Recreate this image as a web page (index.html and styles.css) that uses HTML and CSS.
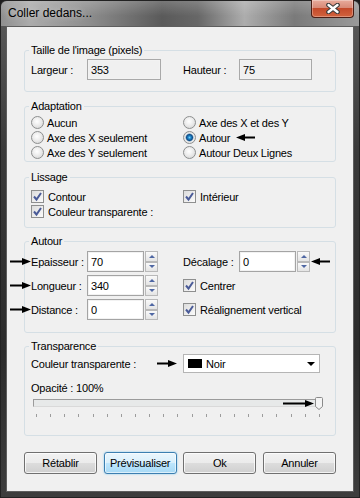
FILE: index.html
```html
<!DOCTYPE html>
<html lang="fr">

<head>
    <meta charset="UTF-8">
    <meta name="viewport" content="width=device-width, initial-scale=1.0">
    <title>Coller dedans...</title>
    <link rel="stylesheet" href="styles.css">
</head>

<body>
    <div class="window">
        <div class="titlebar">
            <span class="title">Coller dedans...</span>
            <button class="close-btn">
                <svg width="14" height="11" viewBox="0 0 14 11">
                    <path d="M2.5 2 L11.5 9 M11.5 2 L2.5 9" stroke="#3b3b3b" stroke-width="4.6" stroke-linecap="round" fill="none" />
                    <path d="M2.5 2 L11.5 9 M11.5 2 L2.5 9" stroke="#ffffff" stroke-width="2.4" stroke-linecap="round" fill="none" />
                </svg>
            </button>
        </div>

        <div class="client">
            <fieldset class="group g-size">
                <legend>Taille de l'image (pixels)</legend>
                <div class="cols">
                    <div class="field"><label>Largeur :</label><input class="textbox disabled w74" value="353" readonly></div>
                    <div class="field"><label>Hauteur :</label><input class="textbox disabled w73" value="75" readonly></div>
                </div>
            </fieldset>

            <fieldset class="group g-adapt">
                <legend>Adaptation</legend>
                <div class="cols">
                    <div class="opt"><span class="radio"></span>Aucun</div>
                    <div class="opt"><span class="radio"></span>Axe des X et des Y</div>
                    <div class="opt"><span class="radio"></span>Axe des X seulement</div>
                    <div class="opt"><span class="radio on"></span>Autour
                        <svg class="arrow-inline" width="19" height="7" viewBox="0 0 19 7"><path d="M19 2.5H8v2h11z M9 0L0 3.5 9 7z" /></svg>
                    </div>
                    <div class="opt"><span class="radio"></span>Axe des Y seulement</div>
                    <div class="opt"><span class="radio"></span>Autour Deux Lignes</div>
                </div>
            </fieldset>

            <fieldset class="group g-smooth">
                <legend>Lissage</legend>
                <div class="cols">
                    <div class="opt"><span class="check"><svg width="11" height="11" viewBox="0 0 11 11"><path d="M2 5.5 L4.5 8.5 L9 2" stroke="#4a5b98" stroke-width="2" fill="none" /></svg></span>Contour</div>
                    <div class="opt"><span class="check"><svg width="11" height="11" viewBox="0 0 11 11"><path d="M2 5.5 L4.5 8.5 L9 2" stroke="#4a5b98" stroke-width="2" fill="none" /></svg></span>Intérieur</div>
                    <div class="opt"><span class="check"><svg width="11" height="11" viewBox="0 0 11 11"><path d="M2 5.5 L4.5 8.5 L9 2" stroke="#4a5b98" stroke-width="2" fill="none" /></svg></span>Couleur transparente :</div>
                </div>
            </fieldset>

            <fieldset class="group g-around">
                <legend>Autour</legend>
                <div class="cols">
                    <div class="field">
                        <svg class="arrow-left" width="21" height="7" viewBox="0 0 21 7"><path d="M0 2.5h13v2H0z M12 0l9 3.5-9 3.5z" /></svg>
                        <label>Epaisseur :</label><input class="textbox w57" value="70">
                        <span class="spin"><span><i class="up"></i></span><span><i class="down"></i></span></span>
                    </div>
                    <div class="field">
                        <label>Décalage :</label><input class="textbox w57" value="0">
                        <span class="spin"><span><i class="up"></i></span><span><i class="down"></i></span></span>
                        <svg class="arrow-after" width="19" height="7" viewBox="0 0 19 7"><path d="M19 2.5H8v2h11z M9 0L0 3.5 9 7z" /></svg>
                    </div>
                    <div class="field">
                        <svg class="arrow-left" width="21" height="7" viewBox="0 0 21 7"><path d="M0 2.5h13v2H0z M12 0l9 3.5-9 3.5z" /></svg>
                        <label>Longueur :</label><input class="textbox w57" value="340">
                        <span class="spin"><span><i class="up"></i></span><span><i class="down"></i></span></span>
                    </div>
                    <div class="opt"><span class="check"><svg width="11" height="11" viewBox="0 0 11 11"><path d="M2 5.5 L4.5 8.5 L9 2" stroke="#4a5b98" stroke-width="2" fill="none" /></svg></span>Centrer</div>
                    <div class="field">
                        <svg class="arrow-left" width="21" height="7" viewBox="0 0 21 7"><path d="M0 2.5h13v2H0z M12 0l9 3.5-9 3.5z" /></svg>
                        <label>Distance :</label><input class="textbox w57" value="0">
                        <span class="spin"><span><i class="up"></i></span><span><i class="down"></i></span></span>
                    </div>
                    <div class="opt"><span class="check"><svg width="11" height="11" viewBox="0 0 11 11"><path d="M2 5.5 L4.5 8.5 L9 2" stroke="#4a5b98" stroke-width="2" fill="none" /></svg></span>Réalignement vertical</div>
                </div>
            </fieldset>

            <fieldset class="group g-transp">
                <legend>Transparence</legend>
                <div class="cols color-row">
                    <div class="field">
                        <label class="wide">Couleur transparente :</label>
                        <svg class="arrow-inline couleur" width="20" height="7" viewBox="0 0 20 7"><path d="M0 2.5h12v2H0z M11 0l9 3.5-9 3.5z" /></svg>
                    </div>
                    <div class="select"><span class="swatch"></span>Noir<span class="caret"></span></div>
                </div>
                <div class="opacity-label">Opacité : 100%</div>
                <div class="slider">
                    <div class="track"></div>
                    <svg class="thumb" width="8" height="13" viewBox="0 0 8 13">
                        <path d="M0.5 1.5 Q0.5 0.5 1.5 0.5 H6.5 Q7.5 0.5 7.5 1.5 V9.5 L4 12.5 L0.5 9.5 Z" fill="#f4f4f4" stroke="#8a8a8a" />
                    </svg>
                    <svg class="arrow-slider" width="31" height="7" viewBox="0 0 31 7"><path d="M0 2.5h23v2H0z M22 0l9 3.5-9 3.5z" /></svg>
                    <div class="ticks">
                        <i></i><i></i><i></i><i></i><i></i><i></i><i></i><i></i><i></i><i></i><i></i>
                        <i></i><i></i><i></i><i></i><i></i><i></i><i></i><i></i><i></i><i></i>
                    </div>
                </div>
            </fieldset>

            <div class="buttons">
                <button class="btn">Rétablir</button>
                <button class="btn default">Prévisualiser</button>
                <button class="btn">Ok</button>
                <button class="btn">Annuler</button>
            </div>
        </div>
    </div>
</body>

</html>
```

FILE: styles.css
```css
* {
    box-sizing: border-box;
}

body {
    margin: 0;
    width: 360px;
    height: 498px;
    overflow: hidden;
    background: #1d1d1d;
    font-family: "Liberation Sans", Arial, sans-serif;
    font-size: 11px;
    letter-spacing: -0.2px;
    color: #000;
}

.window {
    height: 498px;
    display: flex;
    flex-direction: column;
    background: linear-gradient(to bottom, #5c5c5c 0, #3a3a3a 30%, #2b2b2b 70%, #3d3d3d 100%);
    border: 1px solid #222;
    border-radius: 6px 6px 0 0;
}

.titlebar {
    height: 25px;
    display: flex;
    align-items: flex-start;
    justify-content: space-between;
    padding-left: 7px;
    border-radius: 6px 6px 0 0;
    background:
        linear-gradient(to bottom, rgba(255, 255, 255, 0.18), rgba(255, 255, 255, 0) 60%),
        linear-gradient(to right, #8f8f8f 0%, #ababab 8%, #8c8c8c 25%, #5a5a5a 45%, #676767 55%, #adadad 68%, #7a7a7a 82%, #9a9a9a 100%);
}

.title {
    font-size: 12px;
    letter-spacing: 0;
    line-height: 25px;
    text-shadow: 0 0 6px rgba(255, 255, 255, 0.6);
}

.close-btn {
    width: 43px;
    height: 18px;
    margin: -1px 5px 0 0;
    padding: 0;
    display: flex;
    align-items: center;
    justify-content: center;
    border: 1px solid #4a1d14;
    border-top: none;
    border-radius: 0 0 4px 4px;
    background: linear-gradient(to bottom, #e8ab9c 0%, #d88a77 45%, #c44a2b 50%, #d2633e 100%);
    box-shadow: inset 0 0 0 1px rgba(255, 255, 255, 0.3);
}

.client {
    flex: 1;
    margin: 0 5px 5px 5px;
    padding: 17px 17px 0 17px;
    background: #f0f0f0;
    border: 1px solid #5e5e5e;
}

/* group boxes */
.group {
    margin: 0;
    min-width: 0;
    padding: 0 6px;
    border: 1px solid #d5dfe5;
    border-radius: 3px;
}

.group legend {
    margin-left: -2px;
    padding: 0 2px;
    line-height: 13px;
}

.g-size {
    padding-top: 2px;
    padding-bottom: 11px;
}

.g-adapt {
    margin-top: 8px;
    padding-top: 2px;
    padding-bottom: 1px;
}

.g-smooth {
    margin-top: 9px;
    padding-top: 5px;
    padding-bottom: 8px;
}

.g-around {
    margin-top: 7px;
    padding-top: 3px;
    padding-bottom: 12px;
}

.g-transp {
    margin-top: 7px;
    padding-top: 0;
    padding-bottom: 18px;
}

.cols {
    display: grid;
    grid-template-columns: 152px 1fr;
}

.g-size .cols {
    grid-auto-rows: 21px;
}

.g-adapt .cols,
.g-smooth .cols {
    grid-auto-rows: 15px;
}

.g-around .cols {
    grid-auto-rows: 21px;
    row-gap: 3px;
}

.field {
    position: relative;
    display: flex;
    align-items: center;
}

.field label {
    width: 56px;
    flex: none;
}

.field label.wide {
    width: auto;
}

.textbox {
    height: 21px;
    padding: 0 3px;
    border: 1px solid #a4a4a4;
    box-shadow: inset 0 0 0 1px #f2f2f2;
    background: #fff;
    font: inherit;
    letter-spacing: inherit;
    color: #000;
    outline: none;
}

.textbox.disabled {
    background: #f0f0f0;
    border-color: #a9a9a9;
}

.w74 { width: 74px; }
.w73 { width: 73px; }
.w57 { width: 57px; }

.spin {
    display: flex;
    flex-direction: column;
    width: 13px;
    height: 21px;
    margin-left: 1px;
}

.spin span {
    flex: 1;
    display: flex;
    align-items: center;
    justify-content: center;
    border: 1px solid #b9b9b9;
    background: linear-gradient(to bottom, #fafafa, #e4e4e4);
}

.spin i {
    width: 0;
    height: 0;
    border-left: 3px solid transparent;
    border-right: 3px solid transparent;
}

.spin i.up {
    border-bottom: 3px solid #4f67a3;
}

.spin i.down {
    border-top: 3px solid #4f67a3;
}

.arrow-left {
    position: absolute;
    left: -21px;
    top: 7px;
}

.arrow-after {
    margin-left: 1px;
}

.arrow-inline {
    margin-left: 6px;
}

.arrow-inline.couleur {
    margin-left: 21px;
}

/* radios and checkboxes */
.opt {
    display: flex;
    align-items: center;
    white-space: nowrap;
}

.radio {
    flex: none;
    width: 13px;
    height: 13px;
    margin-right: 3px;
    border: 1px solid #8d8f8f;
    border-radius: 50%;
    background: radial-gradient(circle at 45% 40%, #ffffff 0, #ececec 45%, #cfcfcf 100%);
}

.radio.on {
    background: radial-gradient(circle at 50% 50%, #6fd0ff 0, #1f86c8 1.5px, #0f4d8a 3px, #7fa2bf 3.8px, #ececec 4.3px, #d2d2d2 100%);
}

.check {
    flex: none;
    width: 13px;
    height: 13px;
    margin-right: 4px;
    border: 1px solid #8e8f8f;
    background: linear-gradient(135deg, #dcdcdc, #fbfbfb);
    display: flex;
    align-items: center;
    justify-content: center;
}

/* transparence */
.color-row {
    grid-auto-rows: 21px;
}

.select {
    width: 137px;
    height: 19px;
    align-self: center;
    display: flex;
    align-items: center;
    padding-left: 4px;
    border: 1px solid #b5b5b5;
    background: #fff;
}

.swatch {
    width: 14px;
    height: 9px;
    margin-right: 4px;
    background: #000;
}

.caret {
    margin-left: auto;
    margin-right: 4px;
    border-left: 4px solid transparent;
    border-right: 4px solid transparent;
    border-top: 4px solid #000;
}

.opacity-label {
    margin-top: 8px;
    line-height: 13px;
}

.slider {
    position: relative;
    width: 289px;
    margin: 4px 0 0 2px;
}

.track {
    height: 8px;
    border: 1px solid #a8a8a8;
    border-color: #9b9b9b #d9d9d9 #d9d9d9 #9b9b9b;
    background: #e7e9e9;
}

.thumb {
    position: absolute;
    left: 282px;
    top: -2px;
}

.arrow-slider {
    position: absolute;
    left: 250px;
    top: 1px;
}

.ticks {
    width: 284px;
    margin: 7px 0 0 3px;
    display: flex;
    justify-content: space-between;
}

.ticks i {
    width: 1px;
    height: 3px;
    background: #9c9c9c;
}

/* buttons */
.buttons {
    margin-top: 16px;
    display: flex;
    justify-content: space-between;
}

.btn {
    width: 73px;
    height: 22px;
    padding: 0;
    font: inherit;
    letter-spacing: inherit;
    color: #000;
    border: 1px solid #707070;
    border-radius: 3px;
    background: linear-gradient(to bottom, #f2f2f2 0, #ebebeb 50%, #dddddd 50%, #cfcfcf 100%);
    box-shadow: inset 0 0 0 1px rgba(255, 255, 255, 0.75);
}

.btn.default {
    border-color: #3c7fb1;
    background: linear-gradient(to bottom, #eaf6fd 0, #d9f0fc 50%, #bee6fd 50%, #a7d9f5 100%);
    box-shadow: inset 0 0 0 1px rgba(255, 255, 255, 0.6), 0 0 2px #74c5f0;
}
```
